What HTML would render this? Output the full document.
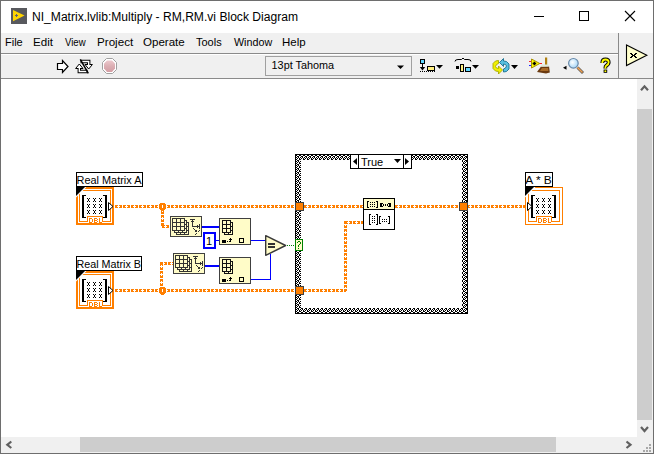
<!DOCTYPE html>
<html><head><meta charset="utf-8">
<style>
html,body{margin:0;padding:0;}
body{width:654px;height:454px;overflow:hidden;position:relative;background:#fff;font-family:"Liberation Sans",sans-serif;}
svg{position:absolute;left:0;top:0;}
text{font-family:"Liberation Sans",sans-serif;}
</style></head><body>
<svg width="654" height="454" viewBox="0 0 654 454" shape-rendering="crispEdges">
<rect x="0" y="0" width="654" height="1" fill="#6e6e6e"/>
<rect x="0" y="0" width="1" height="454" fill="#6e6e6e"/>
<rect x="653" y="0" width="1" height="454" fill="#6e6e6e"/>
<rect x="0" y="453" width="654" height="1" fill="#6e6e6e"/>
<rect x="1" y="33" width="652" height="45" fill="#f0f0f0"/>
<rect x="1" y="53" width="617" height="1" fill="#8a8a8a"/>
<rect x="1" y="54" width="617" height="1" fill="#ffffff"/>
<rect x="1" y="78" width="652" height="1" fill="#8a8a8a"/>
<rect x="618" y="33" width="1" height="45" fill="#8a8a8a"/>
<rect x="11" y="8" width="16" height="16" fill="#58595e"/>
<polygon points="13,10 24.6,15.6 13,21.2" fill="#ffd500" shape-rendering="geometricPrecision"/>
<rect x="15" y="15" width="3" height="1" fill="#5f6170"/>
<rect x="16" y="14" width="1" height="3" fill="#5f6170"/>
<text x="32" y="21" font-size="12" fill="#000" textLength="266" lengthAdjust="spacingAndGlyphs">NI_Matrix.lvlib:Multiply - RM,RM.vi Block Diagram</text>
<rect x="534" y="16" width="10" height="1" fill="#000"/>
<rect x="579.5" y="11.5" width="9" height="9" fill="none" stroke="#000" stroke-width="1"/>
<path d="M625,11 L635,21 M635,11 L625,21" stroke="#000" stroke-width="1.1" shape-rendering="geometricPrecision"/>
<text x="5" y="46" font-size="11" fill="#000">File</text>
<text x="33" y="46" font-size="11" fill="#000" textLength="19.96" lengthAdjust="spacingAndGlyphs">Edit</text>
<text x="65" y="46" font-size="11" fill="#000" textLength="20.65" lengthAdjust="spacingAndGlyphs">View</text>
<text x="97" y="46" font-size="11" fill="#000" textLength="36.25" lengthAdjust="spacingAndGlyphs">Project</text>
<text x="143" y="46" font-size="11" fill="#000" textLength="41.75" lengthAdjust="spacingAndGlyphs">Operate</text>
<text x="196" y="46" font-size="11" fill="#000">Tools</text>
<text x="234" y="46" font-size="11" fill="#000" textLength="38.13" lengthAdjust="spacingAndGlyphs">Window</text>
<text x="282" y="46" font-size="11" fill="#000" textLength="23.63" lengthAdjust="spacingAndGlyphs">Help</text>
<path d="M57.5,63.5 L62.5,63.5 L62.5,60.5 L68,66.5 L62.5,72.5 L62.5,69.5 L57.5,69.5 Z" fill="#fff" stroke="#000" stroke-width="1.2" shape-rendering="geometricPrecision"/>
<g shape-rendering="geometricPrecision" stroke-linejoin="miter"><path d="M80.5,61.5 L88.7,61.5 L88.7,65.5" fill="none" stroke="#000" stroke-width="3.4"/><path d="M87.5,71.5 L79.3,71.5 L79.3,67.5" fill="none" stroke="#000" stroke-width="3.4"/><polygon points="85,64.5 92.4,64.5 88.7,69" fill="#fff" stroke="#000" stroke-width="1"/><polygon points="75.6,68.5 83,68.5 79.3,64" fill="#fff" stroke="#000" stroke-width="1"/><path d="M81.3,61.5 L88.7,61.5 L88.7,65.8" fill="none" stroke="#fff" stroke-width="1.4"/><path d="M86.7,71.5 L79.3,71.5 L79.3,67.2" fill="none" stroke="#fff" stroke-width="1.4"/><line x1="80.3" y1="59.3" x2="88.3" y2="73.3" stroke="#000" stroke-width="1.5"/></g>
<defs><linearGradient id="abg" x1="0" y1="0" x2="0" y2="1"><stop offset="0" stop-color="#ecc8cc"/><stop offset="0.5" stop-color="#dcaeb3"/><stop offset="1" stop-color="#d49ea4"/></linearGradient></defs>
<polygon points="106.5,58.5 112.5,58.5 116.5,62.5 116.5,69.5 112.5,73.5 106.5,73.5 102.5,69.5 102.5,62.5" fill="#fff" stroke="#a0a0a0" stroke-width="1" shape-rendering="geometricPrecision"/>
<polygon points="107,60.5 112,60.5 115,63.5 115,68.5 112,72 107,72 104,68.5 104,63.5" fill="url(#abg)" shape-rendering="geometricPrecision"/>
<rect x="265.5" y="56.5" width="146" height="19" fill="#f0f0f0" stroke="#a0a0a0"/>
<text x="271.6" y="69" font-size="11" fill="#000" textLength="62.5" lengthAdjust="spacingAndGlyphs">13pt Tahoma</text>
<polygon points="397,65.5 404,65.5 400.5,69" fill="#000" shape-rendering="geometricPrecision"/>
<rect x="420" y="59" width="5" height="5" fill="#000"/>
<rect x="421" y="60" width="3" height="3" fill="#5fd7ff"/>
<rect x="422" y="64" width="1" height="5" fill="#000"/>
<polygon points="419.8,67 425.2,67 422.5,70.6" fill="#000" shape-rendering="geometricPrecision"/>
<rect x="420" y="71" width="1" height="1" fill="#000"/>
<rect x="422" y="71" width="1" height="1" fill="#000"/>
<rect x="424" y="71" width="1" height="1" fill="#000"/>
<rect x="426" y="71" width="1" height="1" fill="#000"/>
<rect x="428" y="71" width="1" height="1" fill="#000"/>
<rect x="430" y="71" width="1" height="1" fill="#000"/>
<rect x="432" y="71" width="1" height="1" fill="#000"/>
<rect x="434" y="71" width="1" height="1" fill="#000"/>
<rect x="427" y="66" width="8" height="5" fill="#000"/>
<rect x="428" y="67" width="6" height="3" fill="#fff080"/>
<polygon points="436,65 443,65 439.5,68.8" fill="#000" shape-rendering="geometricPrecision"/>
<path d="M455,61.5 Q455,59.5 458,59.5 L461.5,59.5 L463,58 L464.5,59.5 L468,59.5 Q471,59.5 471,61.5" fill="none" stroke="#000" stroke-width="1" shape-rendering="geometricPrecision"/>
<rect x="456" y="66" width="3" height="3" fill="#000"/>
<rect x="460" y="64" width="4" height="8" fill="#000"/>
<rect x="461" y="65" width="2" height="6" fill="#fff080"/>
<rect x="465" y="67" width="6" height="5" fill="#000"/>
<rect x="466" y="68" width="4" height="3" fill="#5fd7ff"/>
<polygon points="472,65 479,65 475.5,68.8" fill="#000" shape-rendering="geometricPrecision"/>
<g shape-rendering="geometricPrecision" stroke-width="0.9"><polygon points="498.5,60.5 498.5,63.5 496.5,64.5 495.5,66.5 496.5,68 498.5,68.5 498.5,66 502.5,70 498.5,74 498.5,71.5 495.5,71 493,68.5 493,63.5 495.5,61" fill="#f0f000" stroke="#a8a800"/><polygon points="503.5,72 503.5,69 505.5,68 506.5,66 505.5,64.5 503.5,64 503.5,66.5 499.5,62.5 503.5,58.5 503.5,61 506.5,61.5 509,64 509,69 506.5,71.5" fill="#58c0e0" stroke="#1a7090"/></g>
<polygon points="511,65 518,65 514.5,69" fill="#000" shape-rendering="geometricPrecision"/>
<g shape-rendering="geometricPrecision"><line x1="529" y1="61.5" x2="532" y2="61.5" stroke="#ff2020" stroke-width="1"/><line x1="529" y1="65.5" x2="532" y2="65.5" stroke="#2020ff" stroke-width="1"/><line x1="539" y1="63.5" x2="542" y2="63.5" stroke="#ff2020" stroke-width="1"/><polygon points="531.5,59 539.8,63.5 531.5,68" fill="#ffff00" stroke="#a89000" stroke-width="1"/><path d="M532.6,63.5 h3.6 M534.4,61.7 v3.6" stroke="#000" stroke-width="1.6"/><rect x="545" y="57.5" width="2.2" height="8" fill="#b08010"/><polygon points="541,66.5 549,66 549.8,72.5 546,73.5 537,72" fill="#6a3a10"/><polygon points="542,68 548,68 548.5,71 540,71" fill="#a86a28"/><polygon points="541.5,64.5 548.5,64.5 549,66.8 541,66.8" fill="#e0e8d8"/></g>
<polygon points="563,67.7 566.5,65.7 566.5,69.7" fill="#000" shape-rendering="geometricPrecision"/>
<g shape-rendering="geometricPrecision"><line x1="577.5" y1="67.5" x2="583" y2="73" stroke="#505050" stroke-width="2.8"/><line x1="577.5" y1="67.5" x2="582.5" y2="72.5" stroke="#f0a050" stroke-width="1.6"/><defs><radialGradient id="lens" cx="0.4" cy="0.4" r="0.6"><stop offset="0" stop-color="#ffffff"/><stop offset="1" stop-color="#a8d8f8"/></radialGradient></defs><circle cx="573.4" cy="63.3" r="4.8" fill="url(#lens)" stroke="#6888a8" stroke-width="1.2"/></g>
<g shape-rendering="geometricPrecision" fill="none" stroke-linecap="butt"><path d="M602.3,63 Q602.3,59.5 605.5,59.5 Q608.7,59.5 608.7,62.3 Q608.7,64.3 606.3,65.6 Q605.3,66.3 605.3,68.5" stroke="#000" stroke-width="3.8"/><rect x="603.6" y="69.6" width="3.6" height="3.2" fill="#000" stroke="none"/><path d="M602.3,63 Q602.3,59.5 605.5,59.5 Q608.7,59.5 608.7,62.3 Q608.7,64.3 606.3,65.6 Q605.3,66.3 605.3,68.5" stroke="#ffff00" stroke-width="1.8"/><rect x="604.5" y="70.4" width="1.8" height="1.6" fill="#ffff00" stroke="none"/></g>
<polygon points="626.5,45 646.8,55.3 626.5,65.6" fill="#ffffcc" stroke="#000" stroke-width="1.1" shape-rendering="geometricPrecision"/>
<rect x="630" y="53" width="2" height="1" fill="#000"/>
<rect x="635" y="53" width="2" height="1" fill="#000"/>
<rect x="631" y="54" width="2" height="1" fill="#000"/>
<rect x="634" y="54" width="2" height="1" fill="#000"/>
<rect x="632" y="55" width="3" height="1" fill="#000"/>
<rect x="631" y="56" width="2" height="1" fill="#000"/>
<rect x="634" y="56" width="2" height="1" fill="#000"/>
<rect x="630" y="57" width="2" height="1" fill="#000"/>
<rect x="635" y="57" width="2" height="1" fill="#000"/>
<rect x="637" y="79" width="16" height="358" fill="#f0f0f0"/>
<rect x="637" y="109" width="15" height="311" fill="#cdcdcd"/>
<rect x="1" y="437" width="652" height="16" fill="#f0f0f0"/>
<rect x="80" y="437" width="476" height="15" fill="#cdcdcd"/>
<path d="M641,90.3 L644.5,86.3 L648,90.3" fill="none" stroke="#606060" stroke-width="2.2" shape-rendering="geometricPrecision"/>
<path d="M641,427 L644.5,431 L648,427" fill="none" stroke="#606060" stroke-width="2.2" shape-rendering="geometricPrecision"/>
<path d="M11.3,441.5 L7.3,444.8 L11.3,448" fill="none" stroke="#606060" stroke-width="2.2" shape-rendering="geometricPrecision"/>
<path d="M626.5,441.5 L630.5,444.8 L626.5,448" fill="none" stroke="#606060" stroke-width="2.2" shape-rendering="geometricPrecision"/>
<rect x="649" y="444" width="2" height="2" fill="#a8a8a8"/>
<rect x="646" y="447" width="2" height="2" fill="#a8a8a8"/>
<rect x="649" y="447" width="2" height="2" fill="#a8a8a8"/>
<rect x="643" y="450" width="2" height="2" fill="#a8a8a8"/>
<rect x="646" y="450" width="2" height="2" fill="#a8a8a8"/>
<rect x="649" y="450" width="2" height="2" fill="#a8a8a8"/>
<rect x="76.5" y="172.5" width="66" height="14" fill="#fff" stroke="#000"/>
<text x="76.5" y="184" font-size="11" fill="#000" textLength="65" lengthAdjust="spacingAndGlyphs">Real Matrix A</text>
<rect x="76" y="187" width="38" height="38" fill="#ff7f00"/>
<rect x="78" y="189" width="34" height="34" fill="#fff"/>
<rect x="79" y="190" width="32" height="32" fill="#ff7f00"/>
<rect x="80" y="191" width="30" height="30" fill="#fff"/>
<rect x="82" y="195" width="2" height="23" fill="#000"/>
<rect x="82" y="195" width="4" height="1" fill="#000"/>
<rect x="82" y="217" width="4" height="1" fill="#000"/>
<rect x="105" y="195" width="2" height="23" fill="#000"/>
<rect x="103" y="195" width="4" height="1" fill="#000"/>
<rect x="103" y="217" width="4" height="1" fill="#000"/>
<rect x="87" y="198" width="1" height="1" fill="#000"/>
<rect x="89" y="198" width="1" height="1" fill="#000"/>
<rect x="88" y="199" width="1" height="1" fill="#000"/>
<rect x="88" y="200" width="1" height="1" fill="#000"/>
<rect x="87" y="201" width="1" height="1" fill="#000"/>
<rect x="89" y="201" width="1" height="1" fill="#000"/>
<rect x="87" y="204" width="1" height="1" fill="#000"/>
<rect x="89" y="204" width="1" height="1" fill="#000"/>
<rect x="88" y="205" width="1" height="1" fill="#000"/>
<rect x="88" y="206" width="1" height="1" fill="#000"/>
<rect x="87" y="207" width="1" height="1" fill="#000"/>
<rect x="89" y="207" width="1" height="1" fill="#000"/>
<rect x="87" y="210" width="1" height="1" fill="#000"/>
<rect x="89" y="210" width="1" height="1" fill="#000"/>
<rect x="88" y="211" width="1" height="1" fill="#000"/>
<rect x="88" y="212" width="1" height="1" fill="#000"/>
<rect x="87" y="213" width="1" height="1" fill="#000"/>
<rect x="89" y="213" width="1" height="1" fill="#000"/>
<rect x="93" y="198" width="1" height="1" fill="#000"/>
<rect x="95" y="198" width="1" height="1" fill="#000"/>
<rect x="94" y="199" width="1" height="1" fill="#000"/>
<rect x="94" y="200" width="1" height="1" fill="#000"/>
<rect x="93" y="201" width="1" height="1" fill="#000"/>
<rect x="95" y="201" width="1" height="1" fill="#000"/>
<rect x="93" y="204" width="1" height="1" fill="#000"/>
<rect x="95" y="204" width="1" height="1" fill="#000"/>
<rect x="94" y="205" width="1" height="1" fill="#000"/>
<rect x="94" y="206" width="1" height="1" fill="#000"/>
<rect x="93" y="207" width="1" height="1" fill="#000"/>
<rect x="95" y="207" width="1" height="1" fill="#000"/>
<rect x="93" y="210" width="1" height="1" fill="#000"/>
<rect x="95" y="210" width="1" height="1" fill="#000"/>
<rect x="94" y="211" width="1" height="1" fill="#000"/>
<rect x="94" y="212" width="1" height="1" fill="#000"/>
<rect x="93" y="213" width="1" height="1" fill="#000"/>
<rect x="95" y="213" width="1" height="1" fill="#000"/>
<rect x="99" y="198" width="1" height="1" fill="#000"/>
<rect x="101" y="198" width="1" height="1" fill="#000"/>
<rect x="100" y="199" width="1" height="1" fill="#000"/>
<rect x="100" y="200" width="1" height="1" fill="#000"/>
<rect x="99" y="201" width="1" height="1" fill="#000"/>
<rect x="101" y="201" width="1" height="1" fill="#000"/>
<rect x="99" y="204" width="1" height="1" fill="#000"/>
<rect x="101" y="204" width="1" height="1" fill="#000"/>
<rect x="100" y="205" width="1" height="1" fill="#000"/>
<rect x="100" y="206" width="1" height="1" fill="#000"/>
<rect x="99" y="207" width="1" height="1" fill="#000"/>
<rect x="101" y="207" width="1" height="1" fill="#000"/>
<rect x="99" y="210" width="1" height="1" fill="#000"/>
<rect x="101" y="210" width="1" height="1" fill="#000"/>
<rect x="100" y="211" width="1" height="1" fill="#000"/>
<rect x="100" y="212" width="1" height="1" fill="#000"/>
<rect x="99" y="213" width="1" height="1" fill="#000"/>
<rect x="101" y="213" width="1" height="1" fill="#000"/>
<rect x="87" y="216" width="16" height="6" fill="#ff7f00"/>
<rect x="88" y="217" width="14" height="6" fill="#fff"/>
<rect x="89" y="218" width="1" height="5" fill="#ff7f00"/>
<rect x="89" y="218" width="3" height="1" fill="#ff7f00"/>
<rect x="89" y="222" width="3" height="1" fill="#ff7f00"/>
<rect x="92" y="219" width="1" height="3" fill="#ff7f00"/>
<rect x="94" y="218" width="1" height="5" fill="#ff7f00"/>
<rect x="94" y="218" width="3" height="1" fill="#ff7f00"/>
<rect x="94" y="220" width="3" height="1" fill="#ff7f00"/>
<rect x="94" y="222" width="3" height="1" fill="#ff7f00"/>
<rect x="97" y="219" width="1" height="1" fill="#ff7f00"/>
<rect x="97" y="221" width="1" height="1" fill="#ff7f00"/>
<rect x="99" y="218" width="1" height="5" fill="#ff7f00"/>
<rect x="99" y="222" width="3" height="1" fill="#ff7f00"/>
<polygon points="108.5,202.5 113,206.5 108.5,210.5" fill="#fff" stroke="#000" stroke-width="1" shape-rendering="geometricPrecision"/>
<polygon points="76,187 86.5,187 76,197.5" fill="#fff" shape-rendering="geometricPrecision"/>
<polygon points="76,187 85,187 76,196" fill="#000" shape-rendering="geometricPrecision"/>
<rect x="76.5" y="256.5" width="65" height="14" fill="#fff" stroke="#000"/>
<text x="76.5" y="268" font-size="11" fill="#000" textLength="64.5" lengthAdjust="spacingAndGlyphs">Real Matrix B</text>
<rect x="76" y="271" width="38" height="38" fill="#ff7f00"/>
<rect x="78" y="273" width="34" height="34" fill="#fff"/>
<rect x="79" y="274" width="32" height="32" fill="#ff7f00"/>
<rect x="80" y="275" width="30" height="30" fill="#fff"/>
<rect x="82" y="279" width="2" height="23" fill="#000"/>
<rect x="82" y="279" width="4" height="1" fill="#000"/>
<rect x="82" y="301" width="4" height="1" fill="#000"/>
<rect x="105" y="279" width="2" height="23" fill="#000"/>
<rect x="103" y="279" width="4" height="1" fill="#000"/>
<rect x="103" y="301" width="4" height="1" fill="#000"/>
<rect x="87" y="282" width="1" height="1" fill="#000"/>
<rect x="89" y="282" width="1" height="1" fill="#000"/>
<rect x="88" y="283" width="1" height="1" fill="#000"/>
<rect x="88" y="284" width="1" height="1" fill="#000"/>
<rect x="87" y="285" width="1" height="1" fill="#000"/>
<rect x="89" y="285" width="1" height="1" fill="#000"/>
<rect x="87" y="288" width="1" height="1" fill="#000"/>
<rect x="89" y="288" width="1" height="1" fill="#000"/>
<rect x="88" y="289" width="1" height="1" fill="#000"/>
<rect x="88" y="290" width="1" height="1" fill="#000"/>
<rect x="87" y="291" width="1" height="1" fill="#000"/>
<rect x="89" y="291" width="1" height="1" fill="#000"/>
<rect x="87" y="294" width="1" height="1" fill="#000"/>
<rect x="89" y="294" width="1" height="1" fill="#000"/>
<rect x="88" y="295" width="1" height="1" fill="#000"/>
<rect x="88" y="296" width="1" height="1" fill="#000"/>
<rect x="87" y="297" width="1" height="1" fill="#000"/>
<rect x="89" y="297" width="1" height="1" fill="#000"/>
<rect x="93" y="282" width="1" height="1" fill="#000"/>
<rect x="95" y="282" width="1" height="1" fill="#000"/>
<rect x="94" y="283" width="1" height="1" fill="#000"/>
<rect x="94" y="284" width="1" height="1" fill="#000"/>
<rect x="93" y="285" width="1" height="1" fill="#000"/>
<rect x="95" y="285" width="1" height="1" fill="#000"/>
<rect x="93" y="288" width="1" height="1" fill="#000"/>
<rect x="95" y="288" width="1" height="1" fill="#000"/>
<rect x="94" y="289" width="1" height="1" fill="#000"/>
<rect x="94" y="290" width="1" height="1" fill="#000"/>
<rect x="93" y="291" width="1" height="1" fill="#000"/>
<rect x="95" y="291" width="1" height="1" fill="#000"/>
<rect x="93" y="294" width="1" height="1" fill="#000"/>
<rect x="95" y="294" width="1" height="1" fill="#000"/>
<rect x="94" y="295" width="1" height="1" fill="#000"/>
<rect x="94" y="296" width="1" height="1" fill="#000"/>
<rect x="93" y="297" width="1" height="1" fill="#000"/>
<rect x="95" y="297" width="1" height="1" fill="#000"/>
<rect x="99" y="282" width="1" height="1" fill="#000"/>
<rect x="101" y="282" width="1" height="1" fill="#000"/>
<rect x="100" y="283" width="1" height="1" fill="#000"/>
<rect x="100" y="284" width="1" height="1" fill="#000"/>
<rect x="99" y="285" width="1" height="1" fill="#000"/>
<rect x="101" y="285" width="1" height="1" fill="#000"/>
<rect x="99" y="288" width="1" height="1" fill="#000"/>
<rect x="101" y="288" width="1" height="1" fill="#000"/>
<rect x="100" y="289" width="1" height="1" fill="#000"/>
<rect x="100" y="290" width="1" height="1" fill="#000"/>
<rect x="99" y="291" width="1" height="1" fill="#000"/>
<rect x="101" y="291" width="1" height="1" fill="#000"/>
<rect x="99" y="294" width="1" height="1" fill="#000"/>
<rect x="101" y="294" width="1" height="1" fill="#000"/>
<rect x="100" y="295" width="1" height="1" fill="#000"/>
<rect x="100" y="296" width="1" height="1" fill="#000"/>
<rect x="99" y="297" width="1" height="1" fill="#000"/>
<rect x="101" y="297" width="1" height="1" fill="#000"/>
<rect x="87" y="300" width="16" height="6" fill="#ff7f00"/>
<rect x="88" y="301" width="14" height="6" fill="#fff"/>
<rect x="89" y="302" width="1" height="5" fill="#ff7f00"/>
<rect x="89" y="302" width="3" height="1" fill="#ff7f00"/>
<rect x="89" y="306" width="3" height="1" fill="#ff7f00"/>
<rect x="92" y="303" width="1" height="3" fill="#ff7f00"/>
<rect x="94" y="302" width="1" height="5" fill="#ff7f00"/>
<rect x="94" y="302" width="3" height="1" fill="#ff7f00"/>
<rect x="94" y="304" width="3" height="1" fill="#ff7f00"/>
<rect x="94" y="306" width="3" height="1" fill="#ff7f00"/>
<rect x="97" y="303" width="1" height="1" fill="#ff7f00"/>
<rect x="97" y="305" width="1" height="1" fill="#ff7f00"/>
<rect x="99" y="302" width="1" height="5" fill="#ff7f00"/>
<rect x="99" y="306" width="3" height="1" fill="#ff7f00"/>
<polygon points="108.5,286.5 113,290.5 108.5,294.5" fill="#fff" stroke="#000" stroke-width="1" shape-rendering="geometricPrecision"/>
<polygon points="76,271 86.5,271 76,281.5" fill="#fff" shape-rendering="geometricPrecision"/>
<polygon points="76,271 85,271 76,280" fill="#000" shape-rendering="geometricPrecision"/>
<rect x="525.5" y="172.5" width="27" height="14" fill="#fff" stroke="#000"/>
<text x="525.3" y="184" font-size="11" fill="#000" textLength="26.5" lengthAdjust="spacingAndGlyphs">A * B</text>
<rect x="525" y="187" width="38" height="38" fill="#ff7f00"/>
<rect x="526" y="188" width="36" height="36" fill="#fff"/>
<rect x="528" y="190" width="32" height="32" fill="#ff7f00"/>
<rect x="529" y="191" width="30" height="30" fill="#fff"/>
<rect x="531" y="195" width="2" height="23" fill="#000"/>
<rect x="531" y="195" width="4" height="1" fill="#000"/>
<rect x="531" y="217" width="4" height="1" fill="#000"/>
<rect x="554" y="195" width="2" height="23" fill="#000"/>
<rect x="552" y="195" width="4" height="1" fill="#000"/>
<rect x="552" y="217" width="4" height="1" fill="#000"/>
<rect x="536" y="198" width="1" height="1" fill="#000"/>
<rect x="538" y="198" width="1" height="1" fill="#000"/>
<rect x="537" y="199" width="1" height="1" fill="#000"/>
<rect x="537" y="200" width="1" height="1" fill="#000"/>
<rect x="536" y="201" width="1" height="1" fill="#000"/>
<rect x="538" y="201" width="1" height="1" fill="#000"/>
<rect x="536" y="204" width="1" height="1" fill="#000"/>
<rect x="538" y="204" width="1" height="1" fill="#000"/>
<rect x="537" y="205" width="1" height="1" fill="#000"/>
<rect x="537" y="206" width="1" height="1" fill="#000"/>
<rect x="536" y="207" width="1" height="1" fill="#000"/>
<rect x="538" y="207" width="1" height="1" fill="#000"/>
<rect x="536" y="210" width="1" height="1" fill="#000"/>
<rect x="538" y="210" width="1" height="1" fill="#000"/>
<rect x="537" y="211" width="1" height="1" fill="#000"/>
<rect x="537" y="212" width="1" height="1" fill="#000"/>
<rect x="536" y="213" width="1" height="1" fill="#000"/>
<rect x="538" y="213" width="1" height="1" fill="#000"/>
<rect x="542" y="198" width="1" height="1" fill="#000"/>
<rect x="544" y="198" width="1" height="1" fill="#000"/>
<rect x="543" y="199" width="1" height="1" fill="#000"/>
<rect x="543" y="200" width="1" height="1" fill="#000"/>
<rect x="542" y="201" width="1" height="1" fill="#000"/>
<rect x="544" y="201" width="1" height="1" fill="#000"/>
<rect x="542" y="204" width="1" height="1" fill="#000"/>
<rect x="544" y="204" width="1" height="1" fill="#000"/>
<rect x="543" y="205" width="1" height="1" fill="#000"/>
<rect x="543" y="206" width="1" height="1" fill="#000"/>
<rect x="542" y="207" width="1" height="1" fill="#000"/>
<rect x="544" y="207" width="1" height="1" fill="#000"/>
<rect x="542" y="210" width="1" height="1" fill="#000"/>
<rect x="544" y="210" width="1" height="1" fill="#000"/>
<rect x="543" y="211" width="1" height="1" fill="#000"/>
<rect x="543" y="212" width="1" height="1" fill="#000"/>
<rect x="542" y="213" width="1" height="1" fill="#000"/>
<rect x="544" y="213" width="1" height="1" fill="#000"/>
<rect x="548" y="198" width="1" height="1" fill="#000"/>
<rect x="550" y="198" width="1" height="1" fill="#000"/>
<rect x="549" y="199" width="1" height="1" fill="#000"/>
<rect x="549" y="200" width="1" height="1" fill="#000"/>
<rect x="548" y="201" width="1" height="1" fill="#000"/>
<rect x="550" y="201" width="1" height="1" fill="#000"/>
<rect x="548" y="204" width="1" height="1" fill="#000"/>
<rect x="550" y="204" width="1" height="1" fill="#000"/>
<rect x="549" y="205" width="1" height="1" fill="#000"/>
<rect x="549" y="206" width="1" height="1" fill="#000"/>
<rect x="548" y="207" width="1" height="1" fill="#000"/>
<rect x="550" y="207" width="1" height="1" fill="#000"/>
<rect x="548" y="210" width="1" height="1" fill="#000"/>
<rect x="550" y="210" width="1" height="1" fill="#000"/>
<rect x="549" y="211" width="1" height="1" fill="#000"/>
<rect x="549" y="212" width="1" height="1" fill="#000"/>
<rect x="548" y="213" width="1" height="1" fill="#000"/>
<rect x="550" y="213" width="1" height="1" fill="#000"/>
<rect x="536" y="216" width="16" height="6" fill="#ff7f00"/>
<rect x="537" y="217" width="14" height="6" fill="#fff"/>
<rect x="538" y="218" width="1" height="5" fill="#ff7f00"/>
<rect x="538" y="218" width="3" height="1" fill="#ff7f00"/>
<rect x="538" y="222" width="3" height="1" fill="#ff7f00"/>
<rect x="541" y="219" width="1" height="3" fill="#ff7f00"/>
<rect x="543" y="218" width="1" height="5" fill="#ff7f00"/>
<rect x="543" y="218" width="3" height="1" fill="#ff7f00"/>
<rect x="543" y="220" width="3" height="1" fill="#ff7f00"/>
<rect x="543" y="222" width="3" height="1" fill="#ff7f00"/>
<rect x="546" y="219" width="1" height="1" fill="#ff7f00"/>
<rect x="546" y="221" width="1" height="1" fill="#ff7f00"/>
<rect x="548" y="218" width="1" height="5" fill="#ff7f00"/>
<rect x="548" y="222" width="3" height="1" fill="#ff7f00"/>
<polygon points="527.5,202.5 532,206.5 527.5,210.5" fill="#fff" stroke="#000" stroke-width="1" shape-rendering="geometricPrecision"/>
<polygon points="525,187 535.5,187 525,197.5" fill="#fff" shape-rendering="geometricPrecision"/>
<polygon points="525,187 534,187 525,196" fill="#000" shape-rendering="geometricPrecision"/>
<rect x="295" y="154" width="173" height="160" fill="#000"/>
<rect x="301" y="160" width="161" height="148" fill="#fff"/>
<defs><pattern id="fr" x="0" y="0" width="4" height="4" patternUnits="userSpaceOnUse"><rect width="4" height="4" fill="#fff"/><rect x="1" y="0" width="2" height="1" fill="#000"/><rect x="0" y="1" width="1" height="1" fill="#000"/><rect x="2" y="1" width="1" height="1" fill="#000"/><rect x="1" y="2" width="1" height="1" fill="#000"/><rect x="3" y="2" width="1" height="1" fill="#000"/><rect x="0" y="3" width="1" height="1" fill="#000"/><rect x="3" y="3" width="1" height="1" fill="#000"/></pattern></defs>
<rect x="296" y="155" width="171" height="5" fill="url(#fr)"/>
<rect x="296" y="308" width="171" height="5" fill="url(#fr)"/>
<rect x="296" y="160" width="5" height="148" fill="url(#fr)"/>
<rect x="462" y="160" width="5" height="148" fill="url(#fr)"/>
<rect x="350" y="154" width="62" height="15" fill="#000"/>
<rect x="351" y="155" width="60" height="13" fill="#fff"/>
<rect x="358" y="155" width="1" height="13" fill="#000"/>
<rect x="403" y="155" width="1" height="13" fill="#000"/>
<polygon points="353,161.5 357,158 357,165" fill="#000" shape-rendering="geometricPrecision"/>
<polygon points="405,158 409,161.5 405,165" fill="#000" shape-rendering="geometricPrecision"/>
<text x="361" y="166" font-size="11" fill="#000">True</text>
<polygon points="394,159 401,159 397.5,163" fill="#000" shape-rendering="geometricPrecision"/>
<rect x="115" y="205" width="3" height="1" fill="#ff7f00"/>
<rect x="115" y="207" width="3" height="1" fill="#ff7f00"/>
<rect x="119" y="205" width="3" height="1" fill="#ff7f00"/>
<rect x="119" y="207" width="3" height="1" fill="#ff7f00"/>
<rect x="123" y="205" width="3" height="1" fill="#ff7f00"/>
<rect x="123" y="207" width="3" height="1" fill="#ff7f00"/>
<rect x="127" y="205" width="3" height="1" fill="#ff7f00"/>
<rect x="127" y="207" width="3" height="1" fill="#ff7f00"/>
<rect x="131" y="205" width="3" height="1" fill="#ff7f00"/>
<rect x="131" y="207" width="3" height="1" fill="#ff7f00"/>
<rect x="135" y="205" width="3" height="1" fill="#ff7f00"/>
<rect x="135" y="207" width="3" height="1" fill="#ff7f00"/>
<rect x="139" y="205" width="3" height="1" fill="#ff7f00"/>
<rect x="139" y="207" width="3" height="1" fill="#ff7f00"/>
<rect x="143" y="205" width="3" height="1" fill="#ff7f00"/>
<rect x="143" y="207" width="3" height="1" fill="#ff7f00"/>
<rect x="147" y="205" width="3" height="1" fill="#ff7f00"/>
<rect x="147" y="207" width="3" height="1" fill="#ff7f00"/>
<rect x="151" y="205" width="3" height="1" fill="#ff7f00"/>
<rect x="151" y="207" width="3" height="1" fill="#ff7f00"/>
<rect x="155" y="205" width="3" height="1" fill="#ff7f00"/>
<rect x="155" y="207" width="3" height="1" fill="#ff7f00"/>
<rect x="159" y="205" width="3" height="1" fill="#ff7f00"/>
<rect x="159" y="207" width="3" height="1" fill="#ff7f00"/>
<rect x="163" y="205" width="3" height="1" fill="#ff7f00"/>
<rect x="163" y="207" width="3" height="1" fill="#ff7f00"/>
<rect x="167" y="205" width="3" height="1" fill="#ff7f00"/>
<rect x="167" y="207" width="3" height="1" fill="#ff7f00"/>
<rect x="171" y="205" width="3" height="1" fill="#ff7f00"/>
<rect x="171" y="207" width="3" height="1" fill="#ff7f00"/>
<rect x="175" y="205" width="3" height="1" fill="#ff7f00"/>
<rect x="175" y="207" width="3" height="1" fill="#ff7f00"/>
<rect x="179" y="205" width="3" height="1" fill="#ff7f00"/>
<rect x="179" y="207" width="3" height="1" fill="#ff7f00"/>
<rect x="183" y="205" width="3" height="1" fill="#ff7f00"/>
<rect x="183" y="207" width="3" height="1" fill="#ff7f00"/>
<rect x="187" y="205" width="3" height="1" fill="#ff7f00"/>
<rect x="187" y="207" width="3" height="1" fill="#ff7f00"/>
<rect x="191" y="205" width="3" height="1" fill="#ff7f00"/>
<rect x="191" y="207" width="3" height="1" fill="#ff7f00"/>
<rect x="195" y="205" width="3" height="1" fill="#ff7f00"/>
<rect x="195" y="207" width="3" height="1" fill="#ff7f00"/>
<rect x="199" y="205" width="3" height="1" fill="#ff7f00"/>
<rect x="199" y="207" width="3" height="1" fill="#ff7f00"/>
<rect x="203" y="205" width="3" height="1" fill="#ff7f00"/>
<rect x="203" y="207" width="3" height="1" fill="#ff7f00"/>
<rect x="207" y="205" width="3" height="1" fill="#ff7f00"/>
<rect x="207" y="207" width="3" height="1" fill="#ff7f00"/>
<rect x="211" y="205" width="3" height="1" fill="#ff7f00"/>
<rect x="211" y="207" width="3" height="1" fill="#ff7f00"/>
<rect x="215" y="205" width="3" height="1" fill="#ff7f00"/>
<rect x="215" y="207" width="3" height="1" fill="#ff7f00"/>
<rect x="219" y="205" width="3" height="1" fill="#ff7f00"/>
<rect x="219" y="207" width="3" height="1" fill="#ff7f00"/>
<rect x="223" y="205" width="3" height="1" fill="#ff7f00"/>
<rect x="223" y="207" width="3" height="1" fill="#ff7f00"/>
<rect x="227" y="205" width="3" height="1" fill="#ff7f00"/>
<rect x="227" y="207" width="3" height="1" fill="#ff7f00"/>
<rect x="231" y="205" width="3" height="1" fill="#ff7f00"/>
<rect x="231" y="207" width="3" height="1" fill="#ff7f00"/>
<rect x="235" y="205" width="3" height="1" fill="#ff7f00"/>
<rect x="235" y="207" width="3" height="1" fill="#ff7f00"/>
<rect x="239" y="205" width="3" height="1" fill="#ff7f00"/>
<rect x="239" y="207" width="3" height="1" fill="#ff7f00"/>
<rect x="243" y="205" width="3" height="1" fill="#ff7f00"/>
<rect x="243" y="207" width="3" height="1" fill="#ff7f00"/>
<rect x="247" y="205" width="3" height="1" fill="#ff7f00"/>
<rect x="247" y="207" width="3" height="1" fill="#ff7f00"/>
<rect x="251" y="205" width="3" height="1" fill="#ff7f00"/>
<rect x="251" y="207" width="3" height="1" fill="#ff7f00"/>
<rect x="255" y="205" width="3" height="1" fill="#ff7f00"/>
<rect x="255" y="207" width="3" height="1" fill="#ff7f00"/>
<rect x="259" y="205" width="3" height="1" fill="#ff7f00"/>
<rect x="259" y="207" width="3" height="1" fill="#ff7f00"/>
<rect x="263" y="205" width="3" height="1" fill="#ff7f00"/>
<rect x="263" y="207" width="3" height="1" fill="#ff7f00"/>
<rect x="267" y="205" width="3" height="1" fill="#ff7f00"/>
<rect x="267" y="207" width="3" height="1" fill="#ff7f00"/>
<rect x="271" y="205" width="3" height="1" fill="#ff7f00"/>
<rect x="271" y="207" width="3" height="1" fill="#ff7f00"/>
<rect x="275" y="205" width="3" height="1" fill="#ff7f00"/>
<rect x="275" y="207" width="3" height="1" fill="#ff7f00"/>
<rect x="279" y="205" width="3" height="1" fill="#ff7f00"/>
<rect x="279" y="207" width="3" height="1" fill="#ff7f00"/>
<rect x="283" y="205" width="3" height="1" fill="#ff7f00"/>
<rect x="283" y="207" width="3" height="1" fill="#ff7f00"/>
<rect x="287" y="205" width="3" height="1" fill="#ff7f00"/>
<rect x="287" y="207" width="3" height="1" fill="#ff7f00"/>
<rect x="291" y="205" width="3" height="1" fill="#ff7f00"/>
<rect x="291" y="207" width="3" height="1" fill="#ff7f00"/>
<rect x="295" y="205" width="2" height="1" fill="#ff7f00"/>
<rect x="295" y="207" width="2" height="1" fill="#ff7f00"/>
<rect x="115" y="206" width="2" height="1" fill="#ff7f00"/>
<rect x="120" y="206" width="2" height="1" fill="#ff7f00"/>
<rect x="123" y="206" width="2" height="1" fill="#ff7f00"/>
<rect x="128" y="206" width="2" height="1" fill="#ff7f00"/>
<rect x="131" y="206" width="2" height="1" fill="#ff7f00"/>
<rect x="136" y="206" width="2" height="1" fill="#ff7f00"/>
<rect x="139" y="206" width="2" height="1" fill="#ff7f00"/>
<rect x="144" y="206" width="2" height="1" fill="#ff7f00"/>
<rect x="147" y="206" width="2" height="1" fill="#ff7f00"/>
<rect x="152" y="206" width="2" height="1" fill="#ff7f00"/>
<rect x="155" y="206" width="2" height="1" fill="#ff7f00"/>
<rect x="160" y="206" width="2" height="1" fill="#ff7f00"/>
<rect x="163" y="206" width="2" height="1" fill="#ff7f00"/>
<rect x="168" y="206" width="2" height="1" fill="#ff7f00"/>
<rect x="171" y="206" width="2" height="1" fill="#ff7f00"/>
<rect x="176" y="206" width="2" height="1" fill="#ff7f00"/>
<rect x="179" y="206" width="2" height="1" fill="#ff7f00"/>
<rect x="184" y="206" width="2" height="1" fill="#ff7f00"/>
<rect x="187" y="206" width="2" height="1" fill="#ff7f00"/>
<rect x="192" y="206" width="2" height="1" fill="#ff7f00"/>
<rect x="195" y="206" width="2" height="1" fill="#ff7f00"/>
<rect x="200" y="206" width="2" height="1" fill="#ff7f00"/>
<rect x="203" y="206" width="2" height="1" fill="#ff7f00"/>
<rect x="208" y="206" width="2" height="1" fill="#ff7f00"/>
<rect x="211" y="206" width="2" height="1" fill="#ff7f00"/>
<rect x="216" y="206" width="2" height="1" fill="#ff7f00"/>
<rect x="219" y="206" width="2" height="1" fill="#ff7f00"/>
<rect x="224" y="206" width="2" height="1" fill="#ff7f00"/>
<rect x="227" y="206" width="2" height="1" fill="#ff7f00"/>
<rect x="232" y="206" width="2" height="1" fill="#ff7f00"/>
<rect x="235" y="206" width="2" height="1" fill="#ff7f00"/>
<rect x="240" y="206" width="2" height="1" fill="#ff7f00"/>
<rect x="243" y="206" width="2" height="1" fill="#ff7f00"/>
<rect x="248" y="206" width="2" height="1" fill="#ff7f00"/>
<rect x="251" y="206" width="2" height="1" fill="#ff7f00"/>
<rect x="256" y="206" width="2" height="1" fill="#ff7f00"/>
<rect x="259" y="206" width="2" height="1" fill="#ff7f00"/>
<rect x="264" y="206" width="2" height="1" fill="#ff7f00"/>
<rect x="267" y="206" width="2" height="1" fill="#ff7f00"/>
<rect x="272" y="206" width="2" height="1" fill="#ff7f00"/>
<rect x="275" y="206" width="2" height="1" fill="#ff7f00"/>
<rect x="280" y="206" width="2" height="1" fill="#ff7f00"/>
<rect x="283" y="206" width="2" height="1" fill="#ff7f00"/>
<rect x="288" y="206" width="2" height="1" fill="#ff7f00"/>
<rect x="291" y="206" width="2" height="1" fill="#ff7f00"/>
<rect x="296" y="206" width="1" height="1" fill="#ff7f00"/>
<rect x="115" y="289" width="3" height="1" fill="#ff7f00"/>
<rect x="115" y="291" width="3" height="1" fill="#ff7f00"/>
<rect x="119" y="289" width="3" height="1" fill="#ff7f00"/>
<rect x="119" y="291" width="3" height="1" fill="#ff7f00"/>
<rect x="123" y="289" width="3" height="1" fill="#ff7f00"/>
<rect x="123" y="291" width="3" height="1" fill="#ff7f00"/>
<rect x="127" y="289" width="3" height="1" fill="#ff7f00"/>
<rect x="127" y="291" width="3" height="1" fill="#ff7f00"/>
<rect x="131" y="289" width="3" height="1" fill="#ff7f00"/>
<rect x="131" y="291" width="3" height="1" fill="#ff7f00"/>
<rect x="135" y="289" width="3" height="1" fill="#ff7f00"/>
<rect x="135" y="291" width="3" height="1" fill="#ff7f00"/>
<rect x="139" y="289" width="3" height="1" fill="#ff7f00"/>
<rect x="139" y="291" width="3" height="1" fill="#ff7f00"/>
<rect x="143" y="289" width="3" height="1" fill="#ff7f00"/>
<rect x="143" y="291" width="3" height="1" fill="#ff7f00"/>
<rect x="147" y="289" width="3" height="1" fill="#ff7f00"/>
<rect x="147" y="291" width="3" height="1" fill="#ff7f00"/>
<rect x="151" y="289" width="3" height="1" fill="#ff7f00"/>
<rect x="151" y="291" width="3" height="1" fill="#ff7f00"/>
<rect x="155" y="289" width="3" height="1" fill="#ff7f00"/>
<rect x="155" y="291" width="3" height="1" fill="#ff7f00"/>
<rect x="159" y="289" width="3" height="1" fill="#ff7f00"/>
<rect x="159" y="291" width="3" height="1" fill="#ff7f00"/>
<rect x="163" y="289" width="3" height="1" fill="#ff7f00"/>
<rect x="163" y="291" width="3" height="1" fill="#ff7f00"/>
<rect x="167" y="289" width="3" height="1" fill="#ff7f00"/>
<rect x="167" y="291" width="3" height="1" fill="#ff7f00"/>
<rect x="171" y="289" width="3" height="1" fill="#ff7f00"/>
<rect x="171" y="291" width="3" height="1" fill="#ff7f00"/>
<rect x="175" y="289" width="3" height="1" fill="#ff7f00"/>
<rect x="175" y="291" width="3" height="1" fill="#ff7f00"/>
<rect x="179" y="289" width="3" height="1" fill="#ff7f00"/>
<rect x="179" y="291" width="3" height="1" fill="#ff7f00"/>
<rect x="183" y="289" width="3" height="1" fill="#ff7f00"/>
<rect x="183" y="291" width="3" height="1" fill="#ff7f00"/>
<rect x="187" y="289" width="3" height="1" fill="#ff7f00"/>
<rect x="187" y="291" width="3" height="1" fill="#ff7f00"/>
<rect x="191" y="289" width="3" height="1" fill="#ff7f00"/>
<rect x="191" y="291" width="3" height="1" fill="#ff7f00"/>
<rect x="195" y="289" width="3" height="1" fill="#ff7f00"/>
<rect x="195" y="291" width="3" height="1" fill="#ff7f00"/>
<rect x="199" y="289" width="3" height="1" fill="#ff7f00"/>
<rect x="199" y="291" width="3" height="1" fill="#ff7f00"/>
<rect x="203" y="289" width="3" height="1" fill="#ff7f00"/>
<rect x="203" y="291" width="3" height="1" fill="#ff7f00"/>
<rect x="207" y="289" width="3" height="1" fill="#ff7f00"/>
<rect x="207" y="291" width="3" height="1" fill="#ff7f00"/>
<rect x="211" y="289" width="3" height="1" fill="#ff7f00"/>
<rect x="211" y="291" width="3" height="1" fill="#ff7f00"/>
<rect x="215" y="289" width="3" height="1" fill="#ff7f00"/>
<rect x="215" y="291" width="3" height="1" fill="#ff7f00"/>
<rect x="219" y="289" width="3" height="1" fill="#ff7f00"/>
<rect x="219" y="291" width="3" height="1" fill="#ff7f00"/>
<rect x="223" y="289" width="3" height="1" fill="#ff7f00"/>
<rect x="223" y="291" width="3" height="1" fill="#ff7f00"/>
<rect x="227" y="289" width="3" height="1" fill="#ff7f00"/>
<rect x="227" y="291" width="3" height="1" fill="#ff7f00"/>
<rect x="231" y="289" width="3" height="1" fill="#ff7f00"/>
<rect x="231" y="291" width="3" height="1" fill="#ff7f00"/>
<rect x="235" y="289" width="3" height="1" fill="#ff7f00"/>
<rect x="235" y="291" width="3" height="1" fill="#ff7f00"/>
<rect x="239" y="289" width="3" height="1" fill="#ff7f00"/>
<rect x="239" y="291" width="3" height="1" fill="#ff7f00"/>
<rect x="243" y="289" width="3" height="1" fill="#ff7f00"/>
<rect x="243" y="291" width="3" height="1" fill="#ff7f00"/>
<rect x="247" y="289" width="3" height="1" fill="#ff7f00"/>
<rect x="247" y="291" width="3" height="1" fill="#ff7f00"/>
<rect x="251" y="289" width="3" height="1" fill="#ff7f00"/>
<rect x="251" y="291" width="3" height="1" fill="#ff7f00"/>
<rect x="255" y="289" width="3" height="1" fill="#ff7f00"/>
<rect x="255" y="291" width="3" height="1" fill="#ff7f00"/>
<rect x="259" y="289" width="3" height="1" fill="#ff7f00"/>
<rect x="259" y="291" width="3" height="1" fill="#ff7f00"/>
<rect x="263" y="289" width="3" height="1" fill="#ff7f00"/>
<rect x="263" y="291" width="3" height="1" fill="#ff7f00"/>
<rect x="267" y="289" width="3" height="1" fill="#ff7f00"/>
<rect x="267" y="291" width="3" height="1" fill="#ff7f00"/>
<rect x="271" y="289" width="3" height="1" fill="#ff7f00"/>
<rect x="271" y="291" width="3" height="1" fill="#ff7f00"/>
<rect x="275" y="289" width="3" height="1" fill="#ff7f00"/>
<rect x="275" y="291" width="3" height="1" fill="#ff7f00"/>
<rect x="279" y="289" width="3" height="1" fill="#ff7f00"/>
<rect x="279" y="291" width="3" height="1" fill="#ff7f00"/>
<rect x="283" y="289" width="3" height="1" fill="#ff7f00"/>
<rect x="283" y="291" width="3" height="1" fill="#ff7f00"/>
<rect x="287" y="289" width="3" height="1" fill="#ff7f00"/>
<rect x="287" y="291" width="3" height="1" fill="#ff7f00"/>
<rect x="291" y="289" width="3" height="1" fill="#ff7f00"/>
<rect x="291" y="291" width="3" height="1" fill="#ff7f00"/>
<rect x="295" y="289" width="2" height="1" fill="#ff7f00"/>
<rect x="295" y="291" width="2" height="1" fill="#ff7f00"/>
<rect x="115" y="290" width="2" height="1" fill="#ff7f00"/>
<rect x="120" y="290" width="2" height="1" fill="#ff7f00"/>
<rect x="123" y="290" width="2" height="1" fill="#ff7f00"/>
<rect x="128" y="290" width="2" height="1" fill="#ff7f00"/>
<rect x="131" y="290" width="2" height="1" fill="#ff7f00"/>
<rect x="136" y="290" width="2" height="1" fill="#ff7f00"/>
<rect x="139" y="290" width="2" height="1" fill="#ff7f00"/>
<rect x="144" y="290" width="2" height="1" fill="#ff7f00"/>
<rect x="147" y="290" width="2" height="1" fill="#ff7f00"/>
<rect x="152" y="290" width="2" height="1" fill="#ff7f00"/>
<rect x="155" y="290" width="2" height="1" fill="#ff7f00"/>
<rect x="160" y="290" width="2" height="1" fill="#ff7f00"/>
<rect x="163" y="290" width="2" height="1" fill="#ff7f00"/>
<rect x="168" y="290" width="2" height="1" fill="#ff7f00"/>
<rect x="171" y="290" width="2" height="1" fill="#ff7f00"/>
<rect x="176" y="290" width="2" height="1" fill="#ff7f00"/>
<rect x="179" y="290" width="2" height="1" fill="#ff7f00"/>
<rect x="184" y="290" width="2" height="1" fill="#ff7f00"/>
<rect x="187" y="290" width="2" height="1" fill="#ff7f00"/>
<rect x="192" y="290" width="2" height="1" fill="#ff7f00"/>
<rect x="195" y="290" width="2" height="1" fill="#ff7f00"/>
<rect x="200" y="290" width="2" height="1" fill="#ff7f00"/>
<rect x="203" y="290" width="2" height="1" fill="#ff7f00"/>
<rect x="208" y="290" width="2" height="1" fill="#ff7f00"/>
<rect x="211" y="290" width="2" height="1" fill="#ff7f00"/>
<rect x="216" y="290" width="2" height="1" fill="#ff7f00"/>
<rect x="219" y="290" width="2" height="1" fill="#ff7f00"/>
<rect x="224" y="290" width="2" height="1" fill="#ff7f00"/>
<rect x="227" y="290" width="2" height="1" fill="#ff7f00"/>
<rect x="232" y="290" width="2" height="1" fill="#ff7f00"/>
<rect x="235" y="290" width="2" height="1" fill="#ff7f00"/>
<rect x="240" y="290" width="2" height="1" fill="#ff7f00"/>
<rect x="243" y="290" width="2" height="1" fill="#ff7f00"/>
<rect x="248" y="290" width="2" height="1" fill="#ff7f00"/>
<rect x="251" y="290" width="2" height="1" fill="#ff7f00"/>
<rect x="256" y="290" width="2" height="1" fill="#ff7f00"/>
<rect x="259" y="290" width="2" height="1" fill="#ff7f00"/>
<rect x="264" y="290" width="2" height="1" fill="#ff7f00"/>
<rect x="267" y="290" width="2" height="1" fill="#ff7f00"/>
<rect x="272" y="290" width="2" height="1" fill="#ff7f00"/>
<rect x="275" y="290" width="2" height="1" fill="#ff7f00"/>
<rect x="280" y="290" width="2" height="1" fill="#ff7f00"/>
<rect x="283" y="290" width="2" height="1" fill="#ff7f00"/>
<rect x="288" y="290" width="2" height="1" fill="#ff7f00"/>
<rect x="291" y="290" width="2" height="1" fill="#ff7f00"/>
<rect x="296" y="290" width="1" height="1" fill="#ff7f00"/>
<rect x="161" y="207" width="1" height="3" fill="#ff7f00"/>
<rect x="163" y="207" width="1" height="3" fill="#ff7f00"/>
<rect x="161" y="211" width="1" height="3" fill="#ff7f00"/>
<rect x="163" y="211" width="1" height="3" fill="#ff7f00"/>
<rect x="161" y="215" width="1" height="3" fill="#ff7f00"/>
<rect x="163" y="215" width="1" height="3" fill="#ff7f00"/>
<rect x="161" y="219" width="1" height="3" fill="#ff7f00"/>
<rect x="163" y="219" width="1" height="3" fill="#ff7f00"/>
<rect x="161" y="223" width="1" height="3" fill="#ff7f00"/>
<rect x="163" y="223" width="1" height="3" fill="#ff7f00"/>
<rect x="162" y="207" width="1" height="2" fill="#ff7f00"/>
<rect x="162" y="212" width="1" height="2" fill="#ff7f00"/>
<rect x="162" y="215" width="1" height="2" fill="#ff7f00"/>
<rect x="162" y="220" width="1" height="2" fill="#ff7f00"/>
<rect x="162" y="223" width="1" height="2" fill="#ff7f00"/>
<rect x="162" y="225" width="3" height="1" fill="#ff7f00"/>
<rect x="162" y="227" width="3" height="1" fill="#ff7f00"/>
<rect x="166" y="225" width="3" height="1" fill="#ff7f00"/>
<rect x="166" y="227" width="3" height="1" fill="#ff7f00"/>
<rect x="170" y="225" width="1" height="1" fill="#ff7f00"/>
<rect x="170" y="227" width="1" height="1" fill="#ff7f00"/>
<rect x="162" y="226" width="2" height="1" fill="#ff7f00"/>
<rect x="167" y="226" width="2" height="1" fill="#ff7f00"/>
<rect x="170" y="226" width="1" height="1" fill="#ff7f00"/>
<rect x="160" y="263" width="1" height="3" fill="#ff7f00"/>
<rect x="162" y="263" width="1" height="3" fill="#ff7f00"/>
<rect x="160" y="267" width="1" height="3" fill="#ff7f00"/>
<rect x="162" y="267" width="1" height="3" fill="#ff7f00"/>
<rect x="160" y="271" width="1" height="3" fill="#ff7f00"/>
<rect x="162" y="271" width="1" height="3" fill="#ff7f00"/>
<rect x="160" y="275" width="1" height="3" fill="#ff7f00"/>
<rect x="162" y="275" width="1" height="3" fill="#ff7f00"/>
<rect x="160" y="279" width="1" height="3" fill="#ff7f00"/>
<rect x="162" y="279" width="1" height="3" fill="#ff7f00"/>
<rect x="160" y="283" width="1" height="3" fill="#ff7f00"/>
<rect x="162" y="283" width="1" height="3" fill="#ff7f00"/>
<rect x="160" y="287" width="1" height="3" fill="#ff7f00"/>
<rect x="162" y="287" width="1" height="3" fill="#ff7f00"/>
<rect x="161" y="263" width="1" height="2" fill="#ff7f00"/>
<rect x="161" y="268" width="1" height="2" fill="#ff7f00"/>
<rect x="161" y="271" width="1" height="2" fill="#ff7f00"/>
<rect x="161" y="276" width="1" height="2" fill="#ff7f00"/>
<rect x="161" y="279" width="1" height="2" fill="#ff7f00"/>
<rect x="161" y="284" width="1" height="2" fill="#ff7f00"/>
<rect x="161" y="287" width="1" height="2" fill="#ff7f00"/>
<rect x="160" y="262" width="3" height="1" fill="#ff7f00"/>
<rect x="160" y="264" width="3" height="1" fill="#ff7f00"/>
<rect x="164" y="262" width="3" height="1" fill="#ff7f00"/>
<rect x="164" y="264" width="3" height="1" fill="#ff7f00"/>
<rect x="168" y="262" width="3" height="1" fill="#ff7f00"/>
<rect x="168" y="264" width="3" height="1" fill="#ff7f00"/>
<rect x="172" y="262" width="1" height="1" fill="#ff7f00"/>
<rect x="172" y="264" width="1" height="1" fill="#ff7f00"/>
<rect x="160" y="263" width="2" height="1" fill="#ff7f00"/>
<rect x="165" y="263" width="2" height="1" fill="#ff7f00"/>
<rect x="168" y="263" width="2" height="1" fill="#ff7f00"/>
<rect x="304" y="205" width="3" height="1" fill="#ff7f00"/>
<rect x="304" y="207" width="3" height="1" fill="#ff7f00"/>
<rect x="308" y="205" width="3" height="1" fill="#ff7f00"/>
<rect x="308" y="207" width="3" height="1" fill="#ff7f00"/>
<rect x="312" y="205" width="3" height="1" fill="#ff7f00"/>
<rect x="312" y="207" width="3" height="1" fill="#ff7f00"/>
<rect x="316" y="205" width="3" height="1" fill="#ff7f00"/>
<rect x="316" y="207" width="3" height="1" fill="#ff7f00"/>
<rect x="320" y="205" width="3" height="1" fill="#ff7f00"/>
<rect x="320" y="207" width="3" height="1" fill="#ff7f00"/>
<rect x="324" y="205" width="3" height="1" fill="#ff7f00"/>
<rect x="324" y="207" width="3" height="1" fill="#ff7f00"/>
<rect x="328" y="205" width="3" height="1" fill="#ff7f00"/>
<rect x="328" y="207" width="3" height="1" fill="#ff7f00"/>
<rect x="332" y="205" width="3" height="1" fill="#ff7f00"/>
<rect x="332" y="207" width="3" height="1" fill="#ff7f00"/>
<rect x="336" y="205" width="3" height="1" fill="#ff7f00"/>
<rect x="336" y="207" width="3" height="1" fill="#ff7f00"/>
<rect x="340" y="205" width="3" height="1" fill="#ff7f00"/>
<rect x="340" y="207" width="3" height="1" fill="#ff7f00"/>
<rect x="344" y="205" width="3" height="1" fill="#ff7f00"/>
<rect x="344" y="207" width="3" height="1" fill="#ff7f00"/>
<rect x="348" y="205" width="3" height="1" fill="#ff7f00"/>
<rect x="348" y="207" width="3" height="1" fill="#ff7f00"/>
<rect x="352" y="205" width="3" height="1" fill="#ff7f00"/>
<rect x="352" y="207" width="3" height="1" fill="#ff7f00"/>
<rect x="356" y="205" width="3" height="1" fill="#ff7f00"/>
<rect x="356" y="207" width="3" height="1" fill="#ff7f00"/>
<rect x="360" y="205" width="3" height="1" fill="#ff7f00"/>
<rect x="360" y="207" width="3" height="1" fill="#ff7f00"/>
<rect x="304" y="206" width="2" height="1" fill="#ff7f00"/>
<rect x="309" y="206" width="2" height="1" fill="#ff7f00"/>
<rect x="312" y="206" width="2" height="1" fill="#ff7f00"/>
<rect x="317" y="206" width="2" height="1" fill="#ff7f00"/>
<rect x="320" y="206" width="2" height="1" fill="#ff7f00"/>
<rect x="325" y="206" width="2" height="1" fill="#ff7f00"/>
<rect x="328" y="206" width="2" height="1" fill="#ff7f00"/>
<rect x="333" y="206" width="2" height="1" fill="#ff7f00"/>
<rect x="336" y="206" width="2" height="1" fill="#ff7f00"/>
<rect x="341" y="206" width="2" height="1" fill="#ff7f00"/>
<rect x="344" y="206" width="2" height="1" fill="#ff7f00"/>
<rect x="349" y="206" width="2" height="1" fill="#ff7f00"/>
<rect x="352" y="206" width="2" height="1" fill="#ff7f00"/>
<rect x="357" y="206" width="2" height="1" fill="#ff7f00"/>
<rect x="360" y="206" width="2" height="1" fill="#ff7f00"/>
<rect x="304" y="289" width="3" height="1" fill="#ff7f00"/>
<rect x="304" y="291" width="3" height="1" fill="#ff7f00"/>
<rect x="308" y="289" width="3" height="1" fill="#ff7f00"/>
<rect x="308" y="291" width="3" height="1" fill="#ff7f00"/>
<rect x="312" y="289" width="3" height="1" fill="#ff7f00"/>
<rect x="312" y="291" width="3" height="1" fill="#ff7f00"/>
<rect x="316" y="289" width="3" height="1" fill="#ff7f00"/>
<rect x="316" y="291" width="3" height="1" fill="#ff7f00"/>
<rect x="320" y="289" width="3" height="1" fill="#ff7f00"/>
<rect x="320" y="291" width="3" height="1" fill="#ff7f00"/>
<rect x="324" y="289" width="3" height="1" fill="#ff7f00"/>
<rect x="324" y="291" width="3" height="1" fill="#ff7f00"/>
<rect x="328" y="289" width="3" height="1" fill="#ff7f00"/>
<rect x="328" y="291" width="3" height="1" fill="#ff7f00"/>
<rect x="332" y="289" width="3" height="1" fill="#ff7f00"/>
<rect x="332" y="291" width="3" height="1" fill="#ff7f00"/>
<rect x="336" y="289" width="3" height="1" fill="#ff7f00"/>
<rect x="336" y="291" width="3" height="1" fill="#ff7f00"/>
<rect x="340" y="289" width="3" height="1" fill="#ff7f00"/>
<rect x="340" y="291" width="3" height="1" fill="#ff7f00"/>
<rect x="344" y="289" width="2" height="1" fill="#ff7f00"/>
<rect x="344" y="291" width="2" height="1" fill="#ff7f00"/>
<rect x="304" y="290" width="2" height="1" fill="#ff7f00"/>
<rect x="309" y="290" width="2" height="1" fill="#ff7f00"/>
<rect x="312" y="290" width="2" height="1" fill="#ff7f00"/>
<rect x="317" y="290" width="2" height="1" fill="#ff7f00"/>
<rect x="320" y="290" width="2" height="1" fill="#ff7f00"/>
<rect x="325" y="290" width="2" height="1" fill="#ff7f00"/>
<rect x="328" y="290" width="2" height="1" fill="#ff7f00"/>
<rect x="333" y="290" width="2" height="1" fill="#ff7f00"/>
<rect x="336" y="290" width="2" height="1" fill="#ff7f00"/>
<rect x="341" y="290" width="2" height="1" fill="#ff7f00"/>
<rect x="344" y="290" width="2" height="1" fill="#ff7f00"/>
<rect x="344" y="221" width="1" height="3" fill="#ff7f00"/>
<rect x="346" y="221" width="1" height="3" fill="#ff7f00"/>
<rect x="344" y="225" width="1" height="3" fill="#ff7f00"/>
<rect x="346" y="225" width="1" height="3" fill="#ff7f00"/>
<rect x="344" y="229" width="1" height="3" fill="#ff7f00"/>
<rect x="346" y="229" width="1" height="3" fill="#ff7f00"/>
<rect x="344" y="233" width="1" height="3" fill="#ff7f00"/>
<rect x="346" y="233" width="1" height="3" fill="#ff7f00"/>
<rect x="344" y="237" width="1" height="3" fill="#ff7f00"/>
<rect x="346" y="237" width="1" height="3" fill="#ff7f00"/>
<rect x="344" y="241" width="1" height="3" fill="#ff7f00"/>
<rect x="346" y="241" width="1" height="3" fill="#ff7f00"/>
<rect x="344" y="245" width="1" height="3" fill="#ff7f00"/>
<rect x="346" y="245" width="1" height="3" fill="#ff7f00"/>
<rect x="344" y="249" width="1" height="3" fill="#ff7f00"/>
<rect x="346" y="249" width="1" height="3" fill="#ff7f00"/>
<rect x="344" y="253" width="1" height="3" fill="#ff7f00"/>
<rect x="346" y="253" width="1" height="3" fill="#ff7f00"/>
<rect x="344" y="257" width="1" height="3" fill="#ff7f00"/>
<rect x="346" y="257" width="1" height="3" fill="#ff7f00"/>
<rect x="344" y="261" width="1" height="3" fill="#ff7f00"/>
<rect x="346" y="261" width="1" height="3" fill="#ff7f00"/>
<rect x="344" y="265" width="1" height="3" fill="#ff7f00"/>
<rect x="346" y="265" width="1" height="3" fill="#ff7f00"/>
<rect x="344" y="269" width="1" height="3" fill="#ff7f00"/>
<rect x="346" y="269" width="1" height="3" fill="#ff7f00"/>
<rect x="344" y="273" width="1" height="3" fill="#ff7f00"/>
<rect x="346" y="273" width="1" height="3" fill="#ff7f00"/>
<rect x="344" y="277" width="1" height="3" fill="#ff7f00"/>
<rect x="346" y="277" width="1" height="3" fill="#ff7f00"/>
<rect x="344" y="281" width="1" height="3" fill="#ff7f00"/>
<rect x="346" y="281" width="1" height="3" fill="#ff7f00"/>
<rect x="344" y="285" width="1" height="3" fill="#ff7f00"/>
<rect x="346" y="285" width="1" height="3" fill="#ff7f00"/>
<rect x="344" y="289" width="1" height="2" fill="#ff7f00"/>
<rect x="346" y="289" width="1" height="2" fill="#ff7f00"/>
<rect x="345" y="221" width="1" height="2" fill="#ff7f00"/>
<rect x="345" y="226" width="1" height="2" fill="#ff7f00"/>
<rect x="345" y="229" width="1" height="2" fill="#ff7f00"/>
<rect x="345" y="234" width="1" height="2" fill="#ff7f00"/>
<rect x="345" y="237" width="1" height="2" fill="#ff7f00"/>
<rect x="345" y="242" width="1" height="2" fill="#ff7f00"/>
<rect x="345" y="245" width="1" height="2" fill="#ff7f00"/>
<rect x="345" y="250" width="1" height="2" fill="#ff7f00"/>
<rect x="345" y="253" width="1" height="2" fill="#ff7f00"/>
<rect x="345" y="258" width="1" height="2" fill="#ff7f00"/>
<rect x="345" y="261" width="1" height="2" fill="#ff7f00"/>
<rect x="345" y="266" width="1" height="2" fill="#ff7f00"/>
<rect x="345" y="269" width="1" height="2" fill="#ff7f00"/>
<rect x="345" y="274" width="1" height="2" fill="#ff7f00"/>
<rect x="345" y="277" width="1" height="2" fill="#ff7f00"/>
<rect x="345" y="282" width="1" height="2" fill="#ff7f00"/>
<rect x="345" y="285" width="1" height="2" fill="#ff7f00"/>
<rect x="345" y="290" width="1" height="1" fill="#ff7f00"/>
<rect x="345" y="221" width="3" height="1" fill="#ff7f00"/>
<rect x="345" y="223" width="3" height="1" fill="#ff7f00"/>
<rect x="349" y="221" width="3" height="1" fill="#ff7f00"/>
<rect x="349" y="223" width="3" height="1" fill="#ff7f00"/>
<rect x="353" y="221" width="3" height="1" fill="#ff7f00"/>
<rect x="353" y="223" width="3" height="1" fill="#ff7f00"/>
<rect x="357" y="221" width="3" height="1" fill="#ff7f00"/>
<rect x="357" y="223" width="3" height="1" fill="#ff7f00"/>
<rect x="361" y="221" width="2" height="1" fill="#ff7f00"/>
<rect x="361" y="223" width="2" height="1" fill="#ff7f00"/>
<rect x="345" y="222" width="2" height="1" fill="#ff7f00"/>
<rect x="350" y="222" width="2" height="1" fill="#ff7f00"/>
<rect x="353" y="222" width="2" height="1" fill="#ff7f00"/>
<rect x="358" y="222" width="2" height="1" fill="#ff7f00"/>
<rect x="361" y="222" width="2" height="1" fill="#ff7f00"/>
<rect x="395" y="205" width="3" height="1" fill="#ff7f00"/>
<rect x="395" y="207" width="3" height="1" fill="#ff7f00"/>
<rect x="399" y="205" width="3" height="1" fill="#ff7f00"/>
<rect x="399" y="207" width="3" height="1" fill="#ff7f00"/>
<rect x="403" y="205" width="3" height="1" fill="#ff7f00"/>
<rect x="403" y="207" width="3" height="1" fill="#ff7f00"/>
<rect x="407" y="205" width="3" height="1" fill="#ff7f00"/>
<rect x="407" y="207" width="3" height="1" fill="#ff7f00"/>
<rect x="411" y="205" width="3" height="1" fill="#ff7f00"/>
<rect x="411" y="207" width="3" height="1" fill="#ff7f00"/>
<rect x="415" y="205" width="3" height="1" fill="#ff7f00"/>
<rect x="415" y="207" width="3" height="1" fill="#ff7f00"/>
<rect x="419" y="205" width="3" height="1" fill="#ff7f00"/>
<rect x="419" y="207" width="3" height="1" fill="#ff7f00"/>
<rect x="423" y="205" width="3" height="1" fill="#ff7f00"/>
<rect x="423" y="207" width="3" height="1" fill="#ff7f00"/>
<rect x="427" y="205" width="3" height="1" fill="#ff7f00"/>
<rect x="427" y="207" width="3" height="1" fill="#ff7f00"/>
<rect x="431" y="205" width="3" height="1" fill="#ff7f00"/>
<rect x="431" y="207" width="3" height="1" fill="#ff7f00"/>
<rect x="435" y="205" width="3" height="1" fill="#ff7f00"/>
<rect x="435" y="207" width="3" height="1" fill="#ff7f00"/>
<rect x="439" y="205" width="3" height="1" fill="#ff7f00"/>
<rect x="439" y="207" width="3" height="1" fill="#ff7f00"/>
<rect x="443" y="205" width="3" height="1" fill="#ff7f00"/>
<rect x="443" y="207" width="3" height="1" fill="#ff7f00"/>
<rect x="447" y="205" width="3" height="1" fill="#ff7f00"/>
<rect x="447" y="207" width="3" height="1" fill="#ff7f00"/>
<rect x="451" y="205" width="3" height="1" fill="#ff7f00"/>
<rect x="451" y="207" width="3" height="1" fill="#ff7f00"/>
<rect x="455" y="205" width="3" height="1" fill="#ff7f00"/>
<rect x="455" y="207" width="3" height="1" fill="#ff7f00"/>
<rect x="459" y="205" width="1" height="1" fill="#ff7f00"/>
<rect x="459" y="207" width="1" height="1" fill="#ff7f00"/>
<rect x="395" y="206" width="2" height="1" fill="#ff7f00"/>
<rect x="400" y="206" width="2" height="1" fill="#ff7f00"/>
<rect x="403" y="206" width="2" height="1" fill="#ff7f00"/>
<rect x="408" y="206" width="2" height="1" fill="#ff7f00"/>
<rect x="411" y="206" width="2" height="1" fill="#ff7f00"/>
<rect x="416" y="206" width="2" height="1" fill="#ff7f00"/>
<rect x="419" y="206" width="2" height="1" fill="#ff7f00"/>
<rect x="424" y="206" width="2" height="1" fill="#ff7f00"/>
<rect x="427" y="206" width="2" height="1" fill="#ff7f00"/>
<rect x="432" y="206" width="2" height="1" fill="#ff7f00"/>
<rect x="435" y="206" width="2" height="1" fill="#ff7f00"/>
<rect x="440" y="206" width="2" height="1" fill="#ff7f00"/>
<rect x="443" y="206" width="2" height="1" fill="#ff7f00"/>
<rect x="448" y="206" width="2" height="1" fill="#ff7f00"/>
<rect x="451" y="206" width="2" height="1" fill="#ff7f00"/>
<rect x="456" y="206" width="2" height="1" fill="#ff7f00"/>
<rect x="459" y="206" width="1" height="1" fill="#ff7f00"/>
<rect x="467" y="205" width="3" height="1" fill="#ff7f00"/>
<rect x="467" y="207" width="3" height="1" fill="#ff7f00"/>
<rect x="471" y="205" width="3" height="1" fill="#ff7f00"/>
<rect x="471" y="207" width="3" height="1" fill="#ff7f00"/>
<rect x="475" y="205" width="3" height="1" fill="#ff7f00"/>
<rect x="475" y="207" width="3" height="1" fill="#ff7f00"/>
<rect x="479" y="205" width="3" height="1" fill="#ff7f00"/>
<rect x="479" y="207" width="3" height="1" fill="#ff7f00"/>
<rect x="483" y="205" width="3" height="1" fill="#ff7f00"/>
<rect x="483" y="207" width="3" height="1" fill="#ff7f00"/>
<rect x="487" y="205" width="3" height="1" fill="#ff7f00"/>
<rect x="487" y="207" width="3" height="1" fill="#ff7f00"/>
<rect x="491" y="205" width="3" height="1" fill="#ff7f00"/>
<rect x="491" y="207" width="3" height="1" fill="#ff7f00"/>
<rect x="495" y="205" width="3" height="1" fill="#ff7f00"/>
<rect x="495" y="207" width="3" height="1" fill="#ff7f00"/>
<rect x="499" y="205" width="3" height="1" fill="#ff7f00"/>
<rect x="499" y="207" width="3" height="1" fill="#ff7f00"/>
<rect x="503" y="205" width="3" height="1" fill="#ff7f00"/>
<rect x="503" y="207" width="3" height="1" fill="#ff7f00"/>
<rect x="507" y="205" width="3" height="1" fill="#ff7f00"/>
<rect x="507" y="207" width="3" height="1" fill="#ff7f00"/>
<rect x="511" y="205" width="3" height="1" fill="#ff7f00"/>
<rect x="511" y="207" width="3" height="1" fill="#ff7f00"/>
<rect x="515" y="205" width="3" height="1" fill="#ff7f00"/>
<rect x="515" y="207" width="3" height="1" fill="#ff7f00"/>
<rect x="519" y="205" width="3" height="1" fill="#ff7f00"/>
<rect x="519" y="207" width="3" height="1" fill="#ff7f00"/>
<rect x="523" y="205" width="2" height="1" fill="#ff7f00"/>
<rect x="523" y="207" width="2" height="1" fill="#ff7f00"/>
<rect x="467" y="206" width="2" height="1" fill="#ff7f00"/>
<rect x="472" y="206" width="2" height="1" fill="#ff7f00"/>
<rect x="475" y="206" width="2" height="1" fill="#ff7f00"/>
<rect x="480" y="206" width="2" height="1" fill="#ff7f00"/>
<rect x="483" y="206" width="2" height="1" fill="#ff7f00"/>
<rect x="488" y="206" width="2" height="1" fill="#ff7f00"/>
<rect x="491" y="206" width="2" height="1" fill="#ff7f00"/>
<rect x="496" y="206" width="2" height="1" fill="#ff7f00"/>
<rect x="499" y="206" width="2" height="1" fill="#ff7f00"/>
<rect x="504" y="206" width="2" height="1" fill="#ff7f00"/>
<rect x="507" y="206" width="2" height="1" fill="#ff7f00"/>
<rect x="512" y="206" width="2" height="1" fill="#ff7f00"/>
<rect x="515" y="206" width="2" height="1" fill="#ff7f00"/>
<rect x="520" y="206" width="2" height="1" fill="#ff7f00"/>
<rect x="523" y="206" width="2" height="1" fill="#ff7f00"/>
<rect x="160" y="203" width="5" height="1" fill="#ff7f00"/>
<rect x="159" y="204" width="7" height="5" fill="#ff7f00"/>
<rect x="160" y="209" width="5" height="1" fill="#ff7f00"/>
<rect x="161" y="210" width="3" height="1" fill="#ff7f00"/>
<rect x="162" y="205" width="1" height="3" fill="#fff"/>
<rect x="160" y="287" width="5" height="1" fill="#ff7f00"/>
<rect x="159" y="288" width="7" height="5" fill="#ff7f00"/>
<rect x="160" y="293" width="5" height="1" fill="#ff7f00"/>
<rect x="161" y="294" width="3" height="1" fill="#ff7f00"/>
<rect x="162" y="289" width="1" height="3" fill="#fff"/>
<rect x="295" y="202" width="9" height="9" fill="#404040"/>
<rect x="296" y="203" width="7" height="7" fill="#ff7f00"/>
<rect x="295" y="286" width="9" height="9" fill="#404040"/>
<rect x="296" y="287" width="7" height="7" fill="#ff7f00"/>
<rect x="459" y="202" width="9" height="9" fill="#404040"/>
<rect x="460" y="203" width="7" height="7" fill="#ff7f00"/>
<rect x="202" y="226" width="17" height="2" fill="#0000ff"/>
<rect x="216" y="240" width="3" height="1" fill="#0000ff"/>
<rect x="251" y="240" width="14" height="1" fill="#0000ff"/>
<rect x="205" y="265" width="14" height="2" fill="#0000ff"/>
<rect x="251" y="279" width="20" height="1" fill="#0000ff"/>
<rect x="270" y="254" width="1" height="25" fill="#0000ff"/>
<rect x="203" y="232" width="13" height="17" fill="#0000ff"/>
<rect x="205" y="234" width="9" height="13" fill="#fff"/>
<text x="206" y="245" font-size="11" fill="#000">1</text>
<rect x="170" y="216" width="32" height="21" fill="#404040"/>
<rect x="171" y="217" width="30" height="19" fill="#fffcc8"/>
<rect x="176" y="222" width="13" height="13" fill="#333"/>
<rect x="177" y="223" width="3" height="3" fill="#fffcc8"/>
<rect x="177" y="227" width="3" height="3" fill="#fffcc8"/>
<rect x="177" y="231" width="3" height="3" fill="#fffcc8"/>
<rect x="181" y="223" width="3" height="3" fill="#fffcc8"/>
<rect x="181" y="227" width="3" height="3" fill="#fffcc8"/>
<rect x="181" y="231" width="3" height="3" fill="#fffcc8"/>
<rect x="185" y="223" width="3" height="3" fill="#fffcc8"/>
<rect x="185" y="227" width="3" height="3" fill="#fffcc8"/>
<rect x="185" y="231" width="3" height="3" fill="#fffcc8"/>
<rect x="174" y="220" width="13" height="13" fill="#333"/>
<rect x="175" y="221" width="3" height="3" fill="#fffcc8"/>
<rect x="175" y="225" width="3" height="3" fill="#fffcc8"/>
<rect x="175" y="229" width="3" height="3" fill="#fffcc8"/>
<rect x="179" y="221" width="3" height="3" fill="#fffcc8"/>
<rect x="179" y="225" width="3" height="3" fill="#fffcc8"/>
<rect x="179" y="229" width="3" height="3" fill="#fffcc8"/>
<rect x="183" y="221" width="3" height="3" fill="#fffcc8"/>
<rect x="183" y="225" width="3" height="3" fill="#fffcc8"/>
<rect x="183" y="229" width="3" height="3" fill="#fffcc8"/>
<rect x="172" y="218" width="13" height="13" fill="#333"/>
<rect x="173" y="219" width="3" height="3" fill="#fffcc8"/>
<rect x="173" y="223" width="3" height="3" fill="#fffcc8"/>
<rect x="173" y="227" width="3" height="3" fill="#fffcc8"/>
<rect x="177" y="219" width="3" height="3" fill="#fffcc8"/>
<rect x="177" y="223" width="3" height="3" fill="#fffcc8"/>
<rect x="177" y="227" width="3" height="3" fill="#fffcc8"/>
<rect x="181" y="219" width="3" height="3" fill="#fffcc8"/>
<rect x="181" y="223" width="3" height="3" fill="#fffcc8"/>
<rect x="181" y="227" width="3" height="3" fill="#fffcc8"/>
<rect x="190" y="219" width="5" height="1" fill="#333"/>
<rect x="191" y="221" width="3" height="1" fill="#333"/>
<rect x="192" y="219" width="1" height="8" fill="#333"/>
<rect x="192" y="226" width="8" height="1" fill="#333"/>
<rect x="199" y="224" width="1" height="5" fill="#333"/>
<rect x="197" y="225" width="1" height="3" fill="#333"/>
<rect x="193" y="228" width="1" height="1" fill="#333"/>
<rect x="194" y="229" width="1" height="1" fill="#333"/>
<rect x="199" y="230" width="1" height="1" fill="#333"/>
<rect x="198" y="231" width="1" height="1" fill="#333"/>
<rect x="196" y="233" width="1" height="1" fill="#333"/>
<rect x="195" y="234" width="1" height="1" fill="#333"/>
<rect x="195" y="230" width="2" height="2" fill="#333"/>
<rect x="173" y="253" width="32" height="21" fill="#404040"/>
<rect x="174" y="254" width="30" height="19" fill="#fffcc8"/>
<rect x="179" y="259" width="13" height="13" fill="#333"/>
<rect x="180" y="260" width="3" height="3" fill="#fffcc8"/>
<rect x="180" y="264" width="3" height="3" fill="#fffcc8"/>
<rect x="180" y="268" width="3" height="3" fill="#fffcc8"/>
<rect x="184" y="260" width="3" height="3" fill="#fffcc8"/>
<rect x="184" y="264" width="3" height="3" fill="#fffcc8"/>
<rect x="184" y="268" width="3" height="3" fill="#fffcc8"/>
<rect x="188" y="260" width="3" height="3" fill="#fffcc8"/>
<rect x="188" y="264" width="3" height="3" fill="#fffcc8"/>
<rect x="188" y="268" width="3" height="3" fill="#fffcc8"/>
<rect x="177" y="257" width="13" height="13" fill="#333"/>
<rect x="178" y="258" width="3" height="3" fill="#fffcc8"/>
<rect x="178" y="262" width="3" height="3" fill="#fffcc8"/>
<rect x="178" y="266" width="3" height="3" fill="#fffcc8"/>
<rect x="182" y="258" width="3" height="3" fill="#fffcc8"/>
<rect x="182" y="262" width="3" height="3" fill="#fffcc8"/>
<rect x="182" y="266" width="3" height="3" fill="#fffcc8"/>
<rect x="186" y="258" width="3" height="3" fill="#fffcc8"/>
<rect x="186" y="262" width="3" height="3" fill="#fffcc8"/>
<rect x="186" y="266" width="3" height="3" fill="#fffcc8"/>
<rect x="175" y="255" width="13" height="13" fill="#333"/>
<rect x="176" y="256" width="3" height="3" fill="#fffcc8"/>
<rect x="176" y="260" width="3" height="3" fill="#fffcc8"/>
<rect x="176" y="264" width="3" height="3" fill="#fffcc8"/>
<rect x="180" y="256" width="3" height="3" fill="#fffcc8"/>
<rect x="180" y="260" width="3" height="3" fill="#fffcc8"/>
<rect x="180" y="264" width="3" height="3" fill="#fffcc8"/>
<rect x="184" y="256" width="3" height="3" fill="#fffcc8"/>
<rect x="184" y="260" width="3" height="3" fill="#fffcc8"/>
<rect x="184" y="264" width="3" height="3" fill="#fffcc8"/>
<rect x="193" y="256" width="5" height="1" fill="#333"/>
<rect x="194" y="258" width="3" height="1" fill="#333"/>
<rect x="195" y="256" width="1" height="8" fill="#333"/>
<rect x="195" y="263" width="8" height="1" fill="#333"/>
<rect x="202" y="261" width="1" height="5" fill="#333"/>
<rect x="200" y="262" width="1" height="3" fill="#333"/>
<rect x="196" y="265" width="1" height="1" fill="#333"/>
<rect x="197" y="266" width="1" height="1" fill="#333"/>
<rect x="202" y="267" width="1" height="1" fill="#333"/>
<rect x="201" y="268" width="1" height="1" fill="#333"/>
<rect x="199" y="270" width="1" height="1" fill="#333"/>
<rect x="198" y="271" width="1" height="1" fill="#333"/>
<rect x="198" y="267" width="2" height="2" fill="#333"/>
<rect x="219" y="218" width="32" height="27" fill="#404040"/>
<rect x="220" y="219" width="30" height="25" fill="#fffcc8"/>
<rect x="224" y="222" width="9" height="13" fill="#111"/>
<rect x="225" y="223" width="3" height="3" fill="#fffcc8"/>
<rect x="225" y="227" width="3" height="3" fill="#fffcc8"/>
<rect x="225" y="231" width="3" height="3" fill="#fffcc8"/>
<rect x="229" y="223" width="3" height="3" fill="#fffcc8"/>
<rect x="229" y="227" width="3" height="3" fill="#fffcc8"/>
<rect x="229" y="231" width="3" height="3" fill="#fffcc8"/>
<rect x="222" y="220" width="9" height="13" fill="#111"/>
<rect x="223" y="221" width="3" height="3" fill="#fffcc8"/>
<rect x="223" y="225" width="3" height="3" fill="#fffcc8"/>
<rect x="223" y="229" width="3" height="3" fill="#fffcc8"/>
<rect x="227" y="221" width="3" height="3" fill="#fffcc8"/>
<rect x="227" y="225" width="3" height="3" fill="#fffcc8"/>
<rect x="227" y="229" width="3" height="3" fill="#fffcc8"/>
<rect x="222" y="240" width="4" height="3" fill="#000"/>
<rect x="227" y="241" width="1" height="1" fill="#000"/>
<rect x="230" y="238" width="1" height="4" fill="#000"/>
<rect x="229" y="239" width="3" height="1" fill="#000"/>
<rect x="229" y="241" width="1" height="1" fill="#000"/>
<rect x="239" y="238" width="5" height="5" fill="#000"/>
<rect x="240" y="239" width="3" height="3" fill="#fffcc8"/>
<rect x="219" y="257" width="32" height="27" fill="#404040"/>
<rect x="220" y="258" width="30" height="25" fill="#fffcc8"/>
<rect x="224" y="261" width="9" height="13" fill="#111"/>
<rect x="225" y="262" width="3" height="3" fill="#fffcc8"/>
<rect x="225" y="266" width="3" height="3" fill="#fffcc8"/>
<rect x="225" y="270" width="3" height="3" fill="#fffcc8"/>
<rect x="229" y="262" width="3" height="3" fill="#fffcc8"/>
<rect x="229" y="266" width="3" height="3" fill="#fffcc8"/>
<rect x="229" y="270" width="3" height="3" fill="#fffcc8"/>
<rect x="222" y="259" width="9" height="13" fill="#111"/>
<rect x="223" y="260" width="3" height="3" fill="#fffcc8"/>
<rect x="223" y="264" width="3" height="3" fill="#fffcc8"/>
<rect x="223" y="268" width="3" height="3" fill="#fffcc8"/>
<rect x="227" y="260" width="3" height="3" fill="#fffcc8"/>
<rect x="227" y="264" width="3" height="3" fill="#fffcc8"/>
<rect x="227" y="268" width="3" height="3" fill="#fffcc8"/>
<rect x="222" y="279" width="4" height="3" fill="#000"/>
<rect x="227" y="280" width="1" height="1" fill="#000"/>
<rect x="230" y="277" width="1" height="4" fill="#000"/>
<rect x="229" y="278" width="3" height="1" fill="#000"/>
<rect x="229" y="280" width="1" height="1" fill="#000"/>
<rect x="239" y="277" width="5" height="5" fill="#000"/>
<rect x="240" y="278" width="3" height="3" fill="#fffcc8"/>
<polygon points="265.7,235.7 285.6,245.5 265.7,255.3" fill="#fffcc8" stroke="#383838" stroke-width="1.4" stroke-linejoin="round" shape-rendering="geometricPrecision"/>
<rect x="268" y="243" width="7" height="2" fill="#333"/>
<rect x="268" y="246" width="7" height="2" fill="#333"/>
<rect x="287" y="245" width="1" height="1" fill="#008000"/>
<rect x="289" y="245" width="1" height="1" fill="#008000"/>
<rect x="291" y="245" width="1" height="1" fill="#008000"/>
<rect x="293" y="245" width="1" height="1" fill="#008000"/>
<rect x="295" y="239" width="8" height="12" fill="#008000"/>
<rect x="296" y="240" width="6" height="10" fill="#fffcc8"/>
<rect x="298" y="241" width="1" height="1" fill="#008000"/>
<rect x="299" y="241" width="1" height="1" fill="#008000"/>
<rect x="297" y="242" width="1" height="1" fill="#008000"/>
<rect x="300" y="242" width="1" height="1" fill="#008000"/>
<rect x="300" y="243" width="1" height="1" fill="#008000"/>
<rect x="299" y="244" width="1" height="1" fill="#008000"/>
<rect x="298" y="245" width="1" height="1" fill="#008000"/>
<rect x="298" y="246" width="1" height="1" fill="#008000"/>
<rect x="298" y="248" width="1" height="1" fill="#008000"/>
<rect x="363" y="198" width="32" height="32" fill="#000"/>
<rect x="364" y="199" width="30" height="10" fill="#fffcc8"/>
<rect x="364" y="210" width="30" height="19" fill="#fff"/>
<rect x="367" y="201" width="1" height="7" fill="#000"/>
<rect x="367" y="201" width="2" height="1" fill="#000"/>
<rect x="367" y="207" width="2" height="1" fill="#000"/>
<rect x="377" y="201" width="1" height="7" fill="#000"/>
<rect x="376" y="201" width="2" height="1" fill="#000"/>
<rect x="376" y="207" width="2" height="1" fill="#000"/>
<rect x="370" y="202" width="1" height="1" fill="#000"/>
<rect x="370" y="204" width="1" height="1" fill="#000"/>
<rect x="370" y="206" width="1" height="1" fill="#000"/>
<rect x="372" y="202" width="1" height="1" fill="#000"/>
<rect x="372" y="204" width="1" height="1" fill="#000"/>
<rect x="372" y="206" width="1" height="1" fill="#000"/>
<rect x="374" y="202" width="1" height="1" fill="#000"/>
<rect x="374" y="204" width="1" height="1" fill="#000"/>
<rect x="374" y="206" width="1" height="1" fill="#000"/>
<rect x="380" y="203" width="2" height="4" fill="#000"/>
<rect x="382" y="203" width="1" height="1" fill="#000"/>
<rect x="382" y="206" width="1" height="1" fill="#000"/>
<rect x="389" y="203" width="2" height="4" fill="#000"/>
<rect x="388" y="203" width="1" height="1" fill="#000"/>
<rect x="388" y="206" width="1" height="1" fill="#000"/>
<rect x="383" y="204" width="1" height="2" fill="#000"/>
<rect x="385" y="204" width="1" height="2" fill="#000"/>
<rect x="387" y="204" width="1" height="2" fill="#000"/>
<rect x="369" y="214" width="1" height="11" fill="#000"/>
<rect x="369" y="214" width="2" height="1" fill="#000"/>
<rect x="369" y="224" width="2" height="1" fill="#000"/>
<rect x="377" y="214" width="1" height="11" fill="#000"/>
<rect x="376" y="214" width="2" height="1" fill="#000"/>
<rect x="376" y="224" width="2" height="1" fill="#000"/>
<rect x="372" y="216" width="1" height="1" fill="#000"/>
<rect x="372" y="218" width="1" height="1" fill="#000"/>
<rect x="372" y="220" width="1" height="1" fill="#000"/>
<rect x="372" y="222" width="1" height="1" fill="#000"/>
<rect x="374" y="216" width="1" height="1" fill="#000"/>
<rect x="374" y="218" width="1" height="1" fill="#000"/>
<rect x="374" y="220" width="1" height="1" fill="#000"/>
<rect x="374" y="222" width="1" height="1" fill="#000"/>
<rect x="379" y="216" width="1" height="8" fill="#000"/>
<rect x="379" y="216" width="2" height="1" fill="#000"/>
<rect x="379" y="223" width="2" height="1" fill="#000"/>
<rect x="389" y="216" width="1" height="8" fill="#000"/>
<rect x="388" y="216" width="2" height="1" fill="#000"/>
<rect x="388" y="223" width="2" height="1" fill="#000"/>
<rect x="382" y="219" width="1" height="1" fill="#000"/>
<rect x="382" y="221" width="1" height="1" fill="#000"/>
<rect x="384" y="219" width="1" height="1" fill="#000"/>
<rect x="384" y="221" width="1" height="1" fill="#000"/>
<rect x="386" y="219" width="1" height="1" fill="#000"/>
<rect x="386" y="221" width="1" height="1" fill="#000"/>
</svg>
</body></html>
